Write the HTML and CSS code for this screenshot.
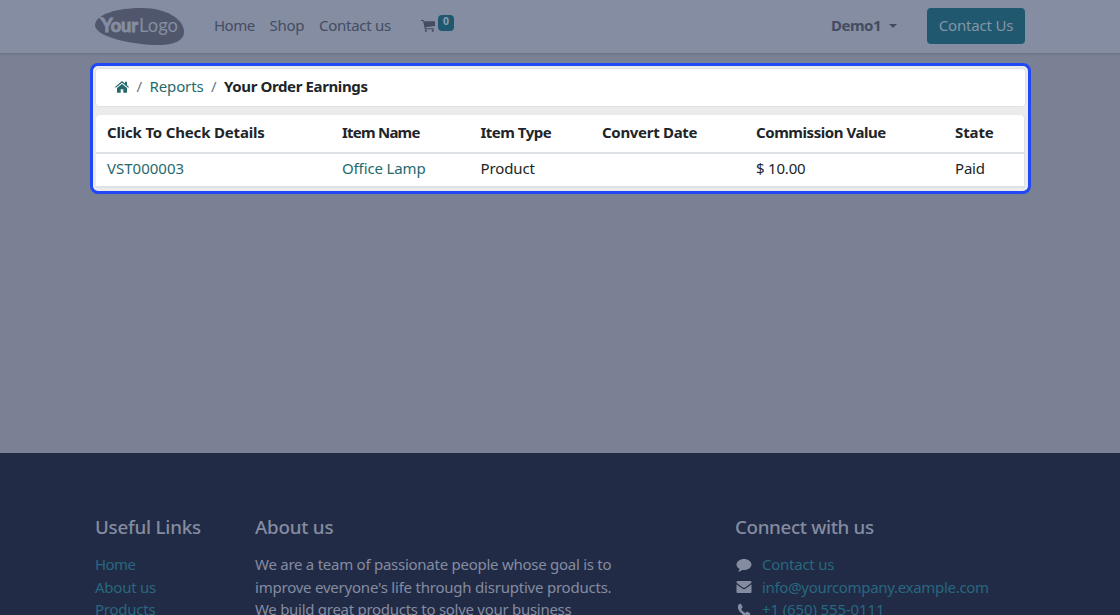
FILE: index.html
```html
<!DOCTYPE html>
<html lang="en">
<head>
<meta charset="utf-8">
<title>Your Order Earnings</title>
<link rel="stylesheet" href="styles.css">
</head>
<body>
<header class="navbar">
  <svg class="logo" width="90" height="38" viewBox="0 0 90 38">
    <path class="logo-shape" d="M0 17C1 6 22 0 47 0C71 0 89 11 89 24C89 33 78 37 64 37C37 37 0 29 0 17Z"/>
    <text class="logo-bold" x="6" y="24" textLength="37" lengthAdjust="spacingAndGlyphs">Your</text>
    <text class="logo-light" x="44" y="24" textLength="39" lengthAdjust="spacingAndGlyphs">Logo</text>
    <path class="logo-mark" d="M3.500 8.500L8 9.500l2 3-3 .5z"/>
  </svg>
  <nav class="menu">
    <a class="m-home">Home</a><a class="m-shop">Shop</a><a class="m-contact">Contact us</a>
  </nav>
  <a class="cart">
    <svg width="14" height="12" viewBox="0 0 14 12"><path d="M0 0h2.600l.5 1.300H14v4.800L4.600 7.200l.2 1h8v1H3.800L2.100 1.100H0zM4.900 9.600a1.100 1.100 0 1 1 0 2.200 1.100 1.100 0 0 1 0-2.200zM11.800 9.600a1.100 1.100 0 1 1 0 2.200 1.100 1.100 0 0 1 0-2.200z"/></svg>
    <span class="badge">0</span>
  </a>
  <a class="user">Demo1</a><i class="caret"></i>
  <a class="button"><span>Contact Us</span></a>
</header>
<main class="content">
  <section class="highlight">
    <nav class="crumbs">
      <svg class="house" width="14" height="12" viewBox="0 0 14 12"><path d="M7 0l3 2.500V.8h2v3.400l2 1.700-.8.9L7 1.700.8 6.800 0 5.900z"/><path d="M7 2.900l5 4.100v4.200q0 .6-.6.6H8.300V8.200H5.700v3.600H2.600q-.6 0-.6-.6V7z"/></svg>
      <span class="slash">/</span><a class="c-reports">Reports</a><span class="slash">/</span><b class="c-title">Your Order Earnings</b>
    </nav>
    <table class="earnings">
      <colgroup><col class="w1"><col class="w2"><col class="w3"><col class="w4"><col class="w5"><col class="w6"></colgroup>
      <thead><tr><th><span class="h1">Click To Check Details</span></th><th><span class="h2">Item Name</span></th><th><span class="h3">Item Type</span></th><th><span class="h4">Convert Date</span></th><th><span class="h5">Commission Value</span></th><th><span class="h6">State</span></th></tr></thead>
      <tbody><tr><td><a class="d1">VST000003</a></td><td><a class="d2">Office Lamp</a></td><td><span class="d3">Product</span></td><td></td><td><span class="d5">$ 10.00</span></td><td><span class="d6">Paid</span></td></tr></tbody>
    </table>
  </section>
</main>
<footer class="footer">
  <section class="links">
    <h5 class="f-links">Useful Links</h5>
    <p><a class="l1">Home</a></p><p><a class="l2">About us</a></p><p><a class="l3">Products</a></p>
  </section>
  <section class="about">
    <h5 class="f-about">About us</h5>
    <p><span class="p1">We are a team of passionate people whose goal is to</span></p>
    <p><span class="p2">improve everyone's life through disruptive products.</span></p>
    <p><span class="p3">We build great products to solve your business</span></p>
  </section>
  <section class="connect">
    <h5 class="f-connect">Connect with us</h5>
    <p><svg width="16" height="14" viewBox="0 0 16 14"><path d="M8 1c4.200 0 7.500 2.500 7.500 5.500S12.200 12 8 12q-.8 0-1.600-.1Q4.500 13.500 2 13.700q1.400-1.200 1.500-2.900C1.600 9.800.5 8.300.5 6.500.5 3.500 3.800 1 8 1z"/></svg><a class="k1">Contact us</a></p>
    <p><svg width="16" height="14" viewBox="0 0 16 14"><path d="M1.500 1h13q1 0 1 1v.7L9.300 7.400Q8 8.300 6.700 7.400L.5 2.700V2q0-1 1-1zM.5 4.300l5.700 4.300q1.800 1.200 3.600 0l5.700-4.300V12q0 1-1 1h-13q-1 0-1-1z"/></svg><a class="k2">info@yourcompany.example.com</a></p>
    <p><svg width="16" height="14" viewBox="0 0 16 14"><path d="M2.300 1.800Q3.500.7 4.900.8l1.800 3.300q0 .6-1.600 1.800 1.300 2.800 4.100 4.100 1.200-1.600 1.800-1.600l3.200 1.800q.1 1.400-1 2.600-2 1.300-4.700-.1-4.600-2.300-6.300-6.700-.6-2.500.1-4.200z"/></svg><a class="k3">+1 (650) 555-0111</a></p>
  </section>
</footer>
</body>
</html>
```

FILE: styles.css
```css
* { box-sizing: border-box; }
body { margin: 0; height: 615px; overflow: hidden; display: flex; flex-direction: column; background: #7b8195; font: 15px/22.5px "Noto Sans", sans-serif; color: #212529; }
a, span, b { white-space: nowrap; }

.navbar { height: 53px; flex: none; padding: 0 95px; display: flex; align-items: center; background: #848da1; color: #454c62; box-shadow: 0 1px 3px #687085; position: relative; }
.logo { flex: none; margin-right: 29px; }
.logo-shape { fill: #50576c; }
.logo-mark { fill: #848da1; }
.logo-bold { font: 700 19px Lato, sans-serif; fill: #848da1; stroke: #848da1; stroke-width: 1; }
.logo-light { font: 400 20px Lato, sans-serif; fill: #848da1; }
.menu { display: flex; width: 207px; padding-bottom: 2px; }
.m-home { width: 55.500px; letter-spacing: -.5px; }
.m-shop { width: 49.500px; letter-spacing: -.3px; }
.m-contact { letter-spacing: -.27px; }
.cart { display: flex; align-items: center; padding-bottom: 2px; }
.cart svg { fill: #454c62; margin-top: 1px; }
.badge { width: 16px; height: 16px; margin: -6px 0 0 3px; border-radius: 4px; background: #20596f; color: #8f9db0; font-size: 10.500px; font-weight: 700; line-height: 13px; text-align: center; }
.user { margin-left: auto; padding-bottom: 2px; font-weight: 700; letter-spacing: -.5px; }
.caret { margin: 0 30px 2px 8px; border: 4px solid transparent; border-top-color: #454c62; border-bottom: 0; }
.button { width: 98px; height: 36px; margin-bottom: 2px; border-radius: 4px; background: #20596f; color: #8494a7; line-height: 35px; text-align: center; letter-spacing: -.2px; }

.content { height: 400px; flex: none; padding: 10px 90px; }
.highlight { width: 941px; height: 131px; padding: 2px; border: 3px solid #2048f5; border-radius: 8px; background: #ebebeb; }
.crumbs { height: 39px; padding: 0 0 2px 19px; display: flex; align-items: center; border: 1px solid #dee2e6; border-radius: 4px; background: #fff; }
.house { fill: #26696c; }
.slash { margin: 0 7.500px; color: #6c757d; }
.crumbs a, td a { color: #26696c; }
.c-reports { letter-spacing: -.15px; }
.c-title { letter-spacing: -.38px; }
.earnings { width: 928px; margin: 8px 0 0 1px; table-layout: fixed; border-collapse: separate; border-spacing: 0; background: #fff; border-radius: 4px 4px 0 0; box-shadow: 1px 0 1px #dee2e6; }
.w1 { width: 235px; } .w2 { width: 138.500px; } .w3 { width: 121.500px; } .w4 { width: 154px; } .w5 { width: 199px; }
th { height: 39px; padding: 0 11px 2px; text-align: left; border-bottom: 2px solid #dee2e6; }
td { height: 34px; padding: 0 11px 3px; border-bottom: 2px solid #dee2e6; }
.h1 { letter-spacing: -.18px; }
.h2 { letter-spacing: -.77px; }
.h3 { letter-spacing: -.5px; }
.h4 { letter-spacing: -.3px; }
.h5 { letter-spacing: -.44px; }
.h6 { letter-spacing: -.1px; }
.d2, .d3 { letter-spacing: -.13px; }
.d5, .d6 { letter-spacing: -.2px; }

.footer { flex: 1; padding: 62px 95px 0; display: flex; background: #212b45; color: #858ca1; }
.links { width: 160px; }
.about { width: 480px; }
.footer h5 { height: 24px; margin: 0 0 14px; font-size: 18.750px; font-weight: 500; line-height: 24px; white-space: nowrap; }
.footer p { height: 22.500px; margin: 0; display: flex; align-items: center; }
.footer p a { color: #286780; }
.f-links, .f-about { letter-spacing: -.22px; }
.f-connect { letter-spacing: -.34px; }
.l1 { letter-spacing: -.6px; }
.l2, .l3, .k1 { letter-spacing: -.25px; }
.p1 { letter-spacing: -.26px; }
.p2 { letter-spacing: -.22px; }
.p3 { letter-spacing: -.28px; }
.k2 { letter-spacing: -.31px; }
.k3 { letter-spacing: -.13px; }
.connect svg { margin: 1px 10px 0 1px; fill: #858ca1; }
```
